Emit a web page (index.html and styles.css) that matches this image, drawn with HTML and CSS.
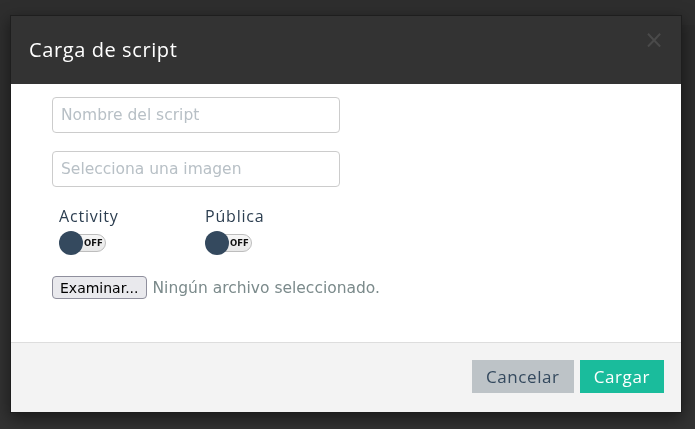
FILE: index.html
```html
<!DOCTYPE html>
<html lang="es">
<head>
<meta charset="utf-8">
<title>Carga de script</title>
<link rel="stylesheet" href="styles.css">
</head>
<body>
<div class="page">
  <div class="page-top">
    <div class="page-card"><span class="ghost">a</span></div>
  </div>
</div>
<div class="overlay">
  <div class="modal">
    <div class="modal-header">
      <h4 class="modal-title">Carga de script</h4>
      <span class="close">&times;</span>
    </div>
    <div class="modal-body">
      <input class="field" type="text" placeholder="Nombre del script">
      <input class="field" type="text" placeholder="Selecciona una imagen">
      <div class="switches">
        <div class="switch-group">
          <div class="switch-label">Activity</div>
          <div class="toggle"><span class="knob"></span><span class="off">OFF</span></div>
        </div>
        <div class="switch-group">
          <div class="switch-label">Pública</div>
          <div class="toggle"><span class="knob"></span><span class="off">OFF</span></div>
        </div>
      </div>
      <div class="file-row">
        <button class="file-btn" type="button">Examinar...</button>
        <span class="file-name">Ningún archivo seleccionado.</span>
      </div>
    </div>
    <div class="modal-footer">
      <button class="btn btn-cancel" type="button">Cancelar</button>
      <button class="btn btn-load" type="button">Cargar</button>
    </div>
  </div>
</div>
</body>
</html>
```

FILE: styles.css
```css
html, body {
  margin: 0;
  padding: 0;
  height: 100%;
  background: #323232;
  overflow: hidden;
}

.page {
  height: 100%;
}

.page-top {
  height: 240px;
  background: #2e2e2e;
  display: flex;
  justify-content: flex-end;
  padding-top: 25px;
  box-sizing: border-box;
}

.page-card {
  width: 40px;
  height: 215px;
  background: #2c2c2c;
  position: relative;
  overflow: hidden;
}

.ghost {
  position: absolute;
  left: 6px;
  top: 90px;
  font-family: "Open Sans", sans-serif;
  font-size: 36px;
  color: #272727;
}

.overlay {
  position: fixed;
  inset: 0;
  padding: 15px 13px 0 10px;
}

.modal {
  width: 672px;
  background: #fff;
  border: 1px solid #1e1e1e;
  box-sizing: border-box;
  box-shadow: 0 5px 15px rgba(0, 0, 0, 0.5);
}

.modal-header {
  height: 68px;
  background: #333333;
  display: flex;
  align-items: center;
  justify-content: space-between;
  padding: 0 18px 0 18px;
}

.modal-title {
  margin: 0;
  margin-top: -2px;
  font-family: "Open Sans", sans-serif;
  font-weight: 400;
  font-size: 20px;
  color: #fff;
  letter-spacing: 0.6px;
}

.close {
  font-family: "DejaVu Sans", sans-serif;
  font-size: 24px;
  color: #4a4a4a;
  margin-top: -21px;
  margin-right: -1px;
}

.modal-body {
  padding: 13px 41px 0 41px;
  height: 258px;
  box-sizing: border-box;
  display: flex;
  flex-direction: column;
  align-items: flex-start;
}

.field {
  width: 288px;
  height: 36px;
  box-sizing: border-box;
  border: 1px solid #cccccc;
  border-radius: 4px;
  padding: 0 8px;
  font-family: "DejaVu Sans", sans-serif;
  font-size: 15.5px;
  margin: 0 0 18px 0;
  outline: none;
}

.field::placeholder {
  color: #b8c0c6;
}

.switches {
  display: flex;
  gap: 0;
  margin-top: 2px;
  padding-left: 7px;
}

.switch-group {
  width: 146px;
}

.switch-label {
  font-family: "Open Sans", sans-serif;
  font-size: 16px;
  letter-spacing: 0.8px;
  color: #2c3e50;
  line-height: 18px;
  margin-bottom: 5px;
}

.toggle {
  position: relative;
  width: 46px;
  height: 18px;
  box-sizing: border-box;
  border: 1px solid #bdbdbd;
  border-radius: 9px;
  background: linear-gradient(#f7f7f7, #e8e8e8);
  margin-left: 1px;
  margin-top: 9px;
}

.knob {
  position: absolute;
  left: -2px;
  top: -4px;
  width: 24px;
  height: 24px;
  border-radius: 50%;
  background: #34495e;
}

.off {
  position: absolute;
  left: 23px;
  top: 2px;
  font-family: "DejaVu Sans", sans-serif;
  font-weight: bold;
  font-size: 8.5px;
  line-height: 12px;
  color: #111;
}

.file-row {
  margin-top: 24px;
  display: flex;
  align-items: center;
  gap: 6px;
}

.file-btn {
  height: 23px;
  box-sizing: border-box;
  border: 1px solid #8f8f9d;
  border-radius: 4px;
  background: #e9e9ed;
  padding: 0 7px;
  font-family: "DejaVu Sans", sans-serif;
  font-size: 14px;
  color: #000;
}

.file-name {
  font-family: "DejaVu Sans", sans-serif;
  font-size: 15.5px;
  color: #7b8a8b;
}

.modal-footer {
  border-top: 1px solid #dddddd;
  background: #f3f3f3;
  height: 70px;
  box-sizing: border-box;
  display: flex;
  justify-content: flex-end;
  align-items: flex-start;
  gap: 6px;
  padding: 17px 17px 0 0;
}

.btn {
  height: 33px;
  border: none;
  font-family: "Open Sans", sans-serif;
  font-size: 17px;
  letter-spacing: 0.6px;
  padding: 0 14px;
}

.btn-cancel {
  background: #bdc3c7;
  color: #34495e;
}

.btn-load {
  background: #1abc9c;
  color: #fff;
}
```
